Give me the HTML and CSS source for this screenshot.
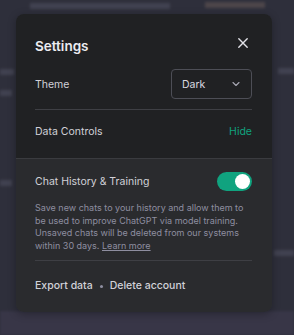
FILE: index.html
```html
<!DOCTYPE html>
<html>
<head>
<meta charset="utf-8">
<link rel="stylesheet" href="styles.css">
</head>
<body>
<div class="backdrop">
  <div class="bg-bar b1"></div>
  <div class="bg-bar b2"></div>
  <div class="bg-bar b3"></div>
  <div class="bg-bar b4"></div>
  <div class="bg-bar b5"></div>
  <div class="bg-bar b6"></div>
  <div class="bg-bar b7"></div>
  <div class="bg-bottom"></div>
</div>
<div class="modal">
  <div class="top">
    <div class="header">
      <h2 class="title">Settings</h2>
      <button class="close" aria-label="Close">
        <svg width="12" height="12" viewBox="0 0 12 12"><path d="M1.8 1.8 L10.2 10.2 M10.2 1.8 L1.8 10.2" stroke="#e2e2e8" stroke-width="1.4" stroke-linecap="round" fill="none"/></svg>
      </button>
    </div>
    <div class="row theme-row">
      <span class="label">Theme</span>
      <div class="select">
        <span>Dark</span>
        <svg width="10" height="10" viewBox="0 0 10 10"><path d="M2 3.5 L5 6.5 L8 3.5" stroke="#a8a8b3" stroke-width="1.1" fill="none" stroke-linecap="round" stroke-linejoin="round"/></svg>
      </div>
    </div>
    <div class="row dc-row">
      <span class="label">Data Controls</span>
      <span class="hide">Hide</span>
    </div>
  </div>
  <div class="bottom">
    <div class="row ch-row">
      <span class="label">Chat History &amp; Training</span>
      <div class="toggle"><div class="knob"></div></div>
    </div>
    <p class="desc">Save new chats to your history and allow them to be used to improve ChatGPT via model training. Unsaved chats will be deleted from our systems within 30 days. <a class="learn">Learn more</a></p>
    <div class="footer">
      <span class="link">Export data</span>
      <span class="dot"></span>
      <span class="link">Delete account</span>
    </div>
  </div>
</div>
</body>
</html>
```
FILE: styles.css
```css
* { box-sizing: border-box; }
html, body { margin: 0; padding: 0; }
body {
  width: 294px;
  height: 335px;
  overflow: hidden;
  position: relative;
  background: #2e2f3b;
  font-family: Inter, "Noto Sans", sans-serif;
}
.backdrop {
  position: absolute;
  inset: 0;
  overflow: hidden;
}
.bg-bar {
  position: absolute;
  height: 6px;
  background: #4a4b5a;
  filter: blur(1.5px);
  opacity: 0.7;
}
.b1 { left: 30px; top: 3px; width: 140px; }
.b2 { left: 205px; top: 2px; width: 60px; background: #5a5050; }
.b3 { left: 0; top: 69px; width: 14px; }
.b4 { left: 0; top: 90px; width: 12px; }
.b5 { left: 278px; top: 68px; width: 16px; }
.b6 { left: 0; top: 180px; width: 12px; }
.b7 { left: 274px; top: 250px; width: 20px; }
.bg-bottom {
  position: absolute;
  left: 0; right: 0; bottom: 0;
  height: 24px;
  background: #383647;
  filter: blur(1px);
}
.modal {
  position: absolute;
  left: 16px;
  top: 14px;
  width: 256px;
  border-radius: 8px;
  overflow: hidden;
  box-shadow: 0 2px 8px rgba(0,0,0,0.3);
}
.top {
  background: #202123;
  padding: 0 20px 6px 19px;
  border-bottom: 1px solid #3a3b3f;
}
.header {
  display: flex;
  align-items: center;
  justify-content: space-between;
  padding-top: 22px;
  height: 42px;
}
.title {
  margin: 0;
  font-size: 13.5px;
  font-weight: 600;
  color: #ececf1;
  line-height: 20px;
}
.close {
  background: none;
  border: 0;
  padding: 0;
  margin-right: 3px;
  margin-top: -7px;
  display: flex;
}
.row {
  display: flex;
  align-items: center;
  justify-content: space-between;
}
.label {
  font-size: 10.5px;
  color: #d1d1d8;
}
.theme-row {
  margin-top: 13px;
  padding-bottom: 10px;
  border-bottom: 1px solid #3e3f44;
}
.select {
  width: 81px;
  height: 30px;
  border: 1px solid #4d4e56;
  border-radius: 4px;
  display: flex;
  align-items: center;
  justify-content: space-between;
  padding: 0 10px 0 10px;
  font-size: 10.5px;
  color: #d9d9e0;
}
.dc-row {
  height: 42px;
}
.hide {
  font-size: 10.5px;
  color: #10a37f;
}
.bottom {
  background: #2a2b2e;
  padding: 13px 20px 18px 19px;
}
.toggle {
  width: 35px;
  height: 19px;
  border-radius: 10px;
  background: #10a37f;
  display: flex;
  align-items: center;
  justify-content: flex-end;
  padding: 0 2px;
}
.knob {
  width: 15px;
  height: 15px;
  border-radius: 50%;
  background: #fff;
}
.desc {
  margin: 11px 0 0 0;
  font-size: 9px;
  line-height: 12.6px;
  color: #8e8ea0;
}
.learn {
  color: #8e8ea0;
  text-decoration: underline;
}
.footer {
  margin-top: 8px;
  border-top: 1px solid #3e3f44;
  padding-top: 17px;
  display: flex;
  align-items: center;
  gap: 7px;
  line-height: 16px;
}
.link {
  font-size: 10.5px;
  font-weight: 500;
  color: #d1d1d8;
}
.dot {
  width: 3px;
  height: 3px;
  border-radius: 50%;
  background: #8e8ea0;
}
```
